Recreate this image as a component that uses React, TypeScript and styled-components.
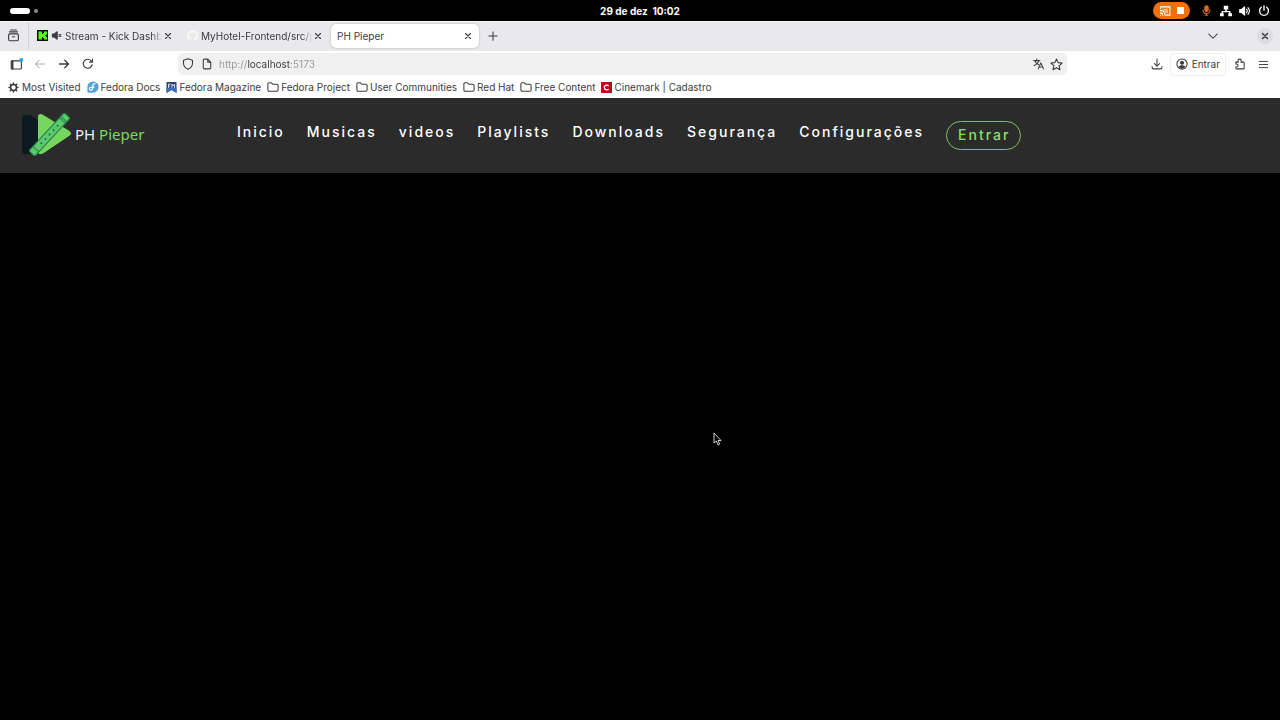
import React from 'react';
import styled, { createGlobalStyle } from 'styled-components';

const GlobalStyle = createGlobalStyle`
  * { box-sizing: border-box; }
  body {
    margin: 0;
    background: #000;
    font-family: Inter, 'Noto Sans', sans-serif;
  }
  button {
    margin: 0;
    padding: 0;
    border: 0;
    background: none;
    color: inherit;
    font: inherit;
    cursor: pointer;
  }
  a { color: inherit; text-decoration: none; }
  svg { display: block; flex: none; }
`;

const Screen = styled.div`
  display: flex;
  flex-direction: column;
  min-height: 100vh;
  font-size: 10px;
  line-height: 14px;
`;

const SystemBar = styled.header`
  display: grid;
  grid-template-columns: 1fr auto 1fr;
  align-items: center;
  height: 21px;
  padding: 0 10px;
  color: #fff;
`;

const Workspaces = styled.button`
  display: flex;
  align-items: center;
  gap: 4px;
  justify-self: start;
`;

const WorkspaceDot = styled.span<{ $active?: boolean }>`
  width: ${p => (p.$active ? 20 : 4)}px;
  height: ${p => (p.$active ? 6 : 4)}px;
  border-radius: 3px;
  background: ${p => (p.$active ? '#fff' : '#8c8c8c')};
`;

const Clock = styled.time`
  font-weight: 700;
  white-space: pre;
`;

const StatusArea = styled.div`
  display: flex;
  align-items: center;
  justify-content: flex-end;
  gap: 6px;
`;

const CastPill = styled.button`
  display: flex;
  align-items: center;
  justify-content: center;
  gap: 5px;
  width: 37px;
  height: 17px;
  margin-right: 4px;
  border-radius: 9px;
  background: #ed7009;
`;

const TabStrip = styled.div`
  display: flex;
  align-items: center;
  height: 30px;
  padding: 0 7px 2px 0;
  border-top: 1px solid #fafafa;
  background: #e9e9eb;
  color: #3b3b3e;
`;

const TabOverview = styled.button`
  display: flex;
  align-items: center;
  align-self: stretch;
  width: 29px;
  padding-left: 7px;
  margin-right: 2px;
  border-right: 1px solid #cfcfd1;
`;

const Tabs = styled.div`
  display: flex;
  gap: 2px;
`;

const Tab = styled.div<{ $active?: boolean }>`
  display: flex;
  align-items: center;
  width: 148px;
  height: 24px;
  padding: 0 5px 0 6px;
  border-radius: 5px;
  background: ${p => (p.$active ? '#fff' : 'transparent')};
  box-shadow: ${p => (p.$active ? '0 0 2px rgba(0, 0, 0, 0.3)' : 'none')};
`;

const TabButton = styled.button<{ $fade?: boolean }>`
  display: flex;
  align-items: center;
  gap: 3px;
  flex: 1;
  min-width: 0;
  white-space: nowrap;
  mask-image: ${p => (p.$fade ? 'linear-gradient(to left, transparent, #000 10px)' : 'none')};
`;

const IconButton = styled.button<{ $size?: number; $round?: boolean }>`
  display: flex;
  align-items: center;
  justify-content: center;
  width: ${p => p.$size ?? 24}px;
  height: ${p => Math.min(p.$size ?? 24, 24)}px;
  border-radius: ${p => (p.$round ? '50%' : '4px')};
  background: ${p => (p.$round ? '#dcdcde' : 'transparent')};
  flex: none;
`;

const WindowControls = styled.div`
  display: flex;
  margin-left: 32px;
`;

const Spring = styled.div`
  flex: 3;
`;

const Toolbar = styled.div`
  display: flex;
  align-items: center;
  height: 26px;
  padding: 0 4px;
  background: #fff;
  color: #3b3b3e;
`;

const AddressBar = styled.form`
  display: flex;
  align-items: center;
  flex: 34;
  height: 22px;
  padding: 0 1px 0 4px;
  border-radius: 5px;
  background: #f0f0f1;
`;

const AddressInput = styled.input`
  flex: 1;
  min-width: 0;
  padding: 0;
  border: 0;
  outline: 0;
  font: inherit;
  color: transparent;
  background: linear-gradient(to right, #96969a 29px, #3b3b3e 29px, #3b3b3e 71px, #96969a 71px);
  -webkit-background-clip: text;
  background-clip: text;
`;

const SignInButton = styled.button`
  display: flex;
  align-items: center;
  gap: 4px;
  height: 23px;
  margin: 0 2px 0 1px;
  padding: 0 5px;
  border: 1px solid #f0f0f1;
  border-radius: 4px;
`;

const Bookmarks = styled.nav`
  display: flex;
  align-items: center;
  gap: 6px;
  height: 21px;
  padding: 0 9px 1px 8px;
  background: #fff;
  color: #3b3b3e;
`;

const Bookmark = styled.a`
  display: flex;
  align-items: center;
  gap: 2px;
  white-space: nowrap;

  &:first-child { gap: 3px; }
`;

const SiteHeader = styled.header`
  display: flex;
  align-items: center;
  height: 75px;
  padding: 0 22px;
  background: #2b2b2b;
`;

const Brand = styled.a`
  display: flex;
  align-items: center;
  gap: 3px;
  width: 215px;
  color: #f2f2f2;
  font: 15px/20px 'Noto Sans', sans-serif;
`;

const BrandName = styled.span`
  padding-bottom: 4px;
`;

const BrandAccent = styled.span`
  color: #7bdb5c;
`;

const SiteNav = styled.nav`
  display: flex;
  align-items: center;
  gap: 22px;
  font-size: 14px;
  line-height: 20px;
  font-weight: 500;
  letter-spacing: 2px;
`;

const PageLinks = styled.div`
  display: flex;
  gap: 22px;
  padding-bottom: 8px;
`;

const NavLink = styled.a`
  color: #fff;
`;

const LoginButton = styled.button`
  height: 29px;
  padding: 0 10px 1px 11px;
  border: 1px solid #7fbf5f;
  border-radius: 15px;
  color: #86e065;
  letter-spacing: inherit;
`;

const Content = styled.main`
  position: relative;
  flex: 1;
  background: #000;
`;

const Pointer = styled.svg`
  position: absolute;
  left: 713px;
  top: 259px;
`;

type IconProps = { size?: number; children: React.ReactNode; weight?: number };

const Icon = ({ size = 12, weight = 1.4, children }: IconProps) => (
  <svg width={size} height={size} viewBox="0 0 16 16" fill="none" stroke="currentColor"
    strokeWidth={weight} strokeLinecap="round" strokeLinejoin="round" aria-hidden="true">
    {children}
  </svg>
);

const CloseIcon = ({ weight = 1.8 }: { weight?: number }) => (
  <Icon size={10} weight={weight}><path d="M4 4l8 8M12 4l-8 8" /></Icon>
);

const FolderIcon = () => (
  <Icon><path d="M1.2 4a1.6 1.6 0 0 1 1.6-1.6h3.1l2 2h5.3A1.6 1.6 0 0 1 14.8 6v6a1.6 1.6 0 0 1-1.6 1.6H2.8A1.6 1.6 0 0 1 1.2 12z" /></Icon>
);

const GearIcon = () => (
  <Icon size={11} weight={2.2}>
    <circle cx="8" cy="8" r="4.3" />
    <path d="M8 1.500v2M8 12.500v2M1.500 8h2M12.500 8h2M3.400 3.400l1.300 1.300M11.300 11.300l1.300 1.300M12.600 3.400l-1.300 1.300M4.700 11.300l-1.300 1.300" />
  </Icon>
);

const FedoraIcon = () => (
  <svg width="12" height="12" viewBox="0 0 16 16" aria-hidden="true">
    <path d="M8 .5A7.500 7.500 0 1 1 8 15.500H2A1.500 1.500 0 0 1 .5 14V8A7.500 7.500 0 0 1 8 .5z" fill="#51a2da" />
    <path d="M11 3.600C9 3 8 4.300 7.800 6l-.4 4.200c-.2 2-2.200 2.700-3.600 1.500-1.300-1.300-.4-3.200 1.500-3.300l4.200-.2" fill="none" stroke="#fff" strokeWidth="1.500" strokeLinecap="round" />
  </svg>
);

const MagazineIcon = () => (
  <svg width="11" height="11" viewBox="0 0 11 11" aria-hidden="true">
    <path d="M.5 0h10v11l-5-3-5 3z" fill="#294172" />
    <path d="M.5 6h10v5l-5-3-5 3z" fill="#3c6eb4" />
    <path d="M2.500 6V2h2.200M2.500 4h1.800M6 6V2l1.300 2 1.300-2v4" fill="none" stroke="#dfe8f5" strokeWidth=".9" />
  </svg>
);

const CinemarkIcon = () => (
  <svg width="11" height="11" viewBox="0 0 11 11" aria-hidden="true">
    <path d="M0 0h11v11H0z" fill="#b80f1c" />
    <path d="M7.600 4A2.400 2.400 0 1 0 7.600 7" fill="none" stroke="#fff" strokeWidth="1.200" />
  </svg>
);

const KickIcon = () => (
  <svg width="11" height="11" viewBox="0 0 11 11" aria-hidden="true">
    <path d="M0 0h11v11H0z" fill="#0b120a" />
    <path d="M1.500 1.500H5V4h1V3h1V1.500h3v3H9v1H8v.5h1v1h1v2.500H7V8H6V7H5v2.500H1.500z" fill="#53fc18" />
  </svg>
);

const MutedIcon = () => (
  <Icon size={11} weight={1.5}>
    <path d="M2 6h2.500L9 2.500v11L4.500 10H2z" fill="currentColor" />
    <path d="M11.500 6.500l3 3M14.500 6.500l-3 3" />
  </Icon>
);

const GithubIcon = () => (
  <svg width="11" height="11" viewBox="0 0 16 16" fill="#f8f8f9" aria-hidden="true">
    <path d="M8 .2a8 8 0 0 0-2.500 15.500c.4.100.5-.2.5-.4v-1.400c-2.200.5-2.700-1-2.700-1-.4-.9-.9-1.200-.9-1.200-.7-.5.100-.5.100-.5.800.100 1.200.8 1.200.8.700 1.200 1.900.9 2.300.7.100-.5.300-.9.500-1.100-1.800-.2-3.600-.9-3.600-4 0-.9.300-1.600.8-2.100-.100-.2-.4-1 .100-2.100 0 0 .7-.2 2.200.8a7.500 7.500 0 0 1 4 0c1.500-1 2.200-.8 2.200-.8.4 1.100.2 1.900.100 2.100.5.600.8 1.300.8 2.100 0 3.100-1.900 3.800-3.600 4 .3.200.5.700.5 1.500v2.200c0 .2.100.5.600.4A8 8 0 0 0 8 .2z" />
  </svg>
);

const BrandMark = () => (
  <svg width="50" height="46" viewBox="0 0 50 46" aria-hidden="true">
    <path d="M3 2h5l14 9v26L7 41.500H3a3 3 0 0 1-3-3V5a3 3 0 0 1 3-3z" fill="#0e1a22" />
    <path d="M20 1.300L47.500 18q3 2.300 0 4.700L21 40.500q-5 2-5-2V4q0-4 4-2.700z" fill="#76d65e" />
    <g transform="translate(27.500 21.500) rotate(-47)">
      <rect x="-26" y="-4" width="52" height="8" rx="2" fill="#5cc96c" stroke="#23824a" strokeWidth="1.100" />
      <path d="M-20 -4v8M19 -4v8M21 -4v8" stroke="#23824a" strokeWidth="1" />
      <g fill="#1d6b40">
        <circle cx="-12" r="1" /><circle cx="-6" r="1" /><circle r="1" /><circle cx="6" r="1" /><circle cx="12" r="1" />
      </g>
    </g>
  </svg>
);

const folders = ['Fedora Project', 'User Communities', 'Red Hat', 'Free Content'];
const pages = ['Inicio', 'Musicas', 'videos', 'Playlists', 'Downloads', 'Segurança', 'Configurações'];

export default function App() {
  return (
    <Screen>
      <GlobalStyle />
      <SystemBar>
        <Workspaces aria-label="Atividades">
          <WorkspaceDot $active />
          <WorkspaceDot />
        </Workspaces>
        <Clock>29 de dez  10:02</Clock>
        <StatusArea>
          <CastPill aria-label="Parar transmissão">
            <Icon weight={1.5}>
              <path d="M2 5V2.500h12.500v11H9.500" /><path d="M5 5h7v6H9.500L5 7z" fill="currentColor" stroke="none" opacity=".5" />
              <path d="M2 7.500a6 6 0 0 1 6 6M2 10.500a3 3 0 0 1 3 3M2 13.500h.1" />
            </Icon>
            <svg width="9" height="7" viewBox="0 0 9 7" aria-hidden="true"><path d="M1 0h7v7H1z" fill="#fff" /></svg>
          </CastPill>
          <IconButton $size={13} aria-label="Microfone">
            <svg width="11" height="11" viewBox="0 0 16 16" fill="none" stroke="#d9691c" strokeWidth="1.500" aria-hidden="true">
              <rect x="5.500" y="1" width="5" height="8.500" rx="2.500" fill="#d9691c" /><path d="M3 6.500v1a5 5 0 0 0 10 0v-1M8 12.500V15M5.500 15h5" />
            </svg>
          </IconButton>
          <IconButton $size={13} aria-label="Rede">
            <svg width="12" height="12" viewBox="0 0 16 16" fill="#fff" aria-hidden="true">
              <path d="M5 1h6v5H9v2h5v3h2v4h-5v-4h1V9.500H4V11h1v4H0v-4h2V8h5V6H5z" />
            </svg>
          </IconButton>
          <IconButton $size={13} aria-label="Volume">
            <Icon weight={1.5}>
              <path d="M1 6h2.500L7.500 2.500v11L3.500 10H1z" fill="currentColor" />
              <path d="M10 5.500a4 4 0 0 1 0 5M12 3.500a7 7 0 0 1 0 9" />
            </Icon>
          </IconButton>
          <IconButton $size={13} aria-label="Desligar">
            <Icon weight={1.8}><path d="M8 1v6M4.500 3a6 6 0 1 0 7 0" /></Icon>
          </IconButton>
        </StatusArea>
      </SystemBar>

      <TabStrip>
        <TabOverview aria-label="Ver abas">
          <Icon size={13}>
            <rect x="2" y="6" width="12" height="8.500" rx="1.500" /><path d="M3 3.500h10M4.500 1.200h7M6.500 9.500h3" />
          </Icon>
        </TabOverview>
        <Tabs role="tablist">
          <Tab>
            <TabButton role="tab" aria-selected="false" $fade>
              <KickIcon /><MutedIcon />Stream - Kick Dashb
            </TabButton>
            <IconButton $size={12} aria-label="Fechar aba"><CloseIcon /></IconButton>
          </Tab>
          <Tab>
            <TabButton role="tab" aria-selected="false" $fade>
              <GithubIcon />MyHotel-Frontend/src/p
            </TabButton>
            <IconButton $size={12} aria-label="Fechar aba"><CloseIcon /></IconButton>
          </Tab>
          <Tab $active>
            <TabButton role="tab" aria-selected="true">PH Pieper</TabButton>
            <IconButton $size={12} aria-label="Fechar aba"><CloseIcon /></IconButton>
          </Tab>
        </Tabs>
        <IconButton $size={28} aria-label="Nova aba">
          <Icon><path d="M8 2.500v11M2.500 8h11" /></Icon>
        </IconButton>
        <Spring />
        <IconButton $size={24} aria-label="Listar abas">
          <Icon><path d="M2.500 5.500L8 11l5.500-5.500" /></Icon>
        </IconButton>
        <WindowControls>
          <IconButton $size={16} $round aria-label="Fechar janela"><CloseIcon weight={2.4} /></IconButton>
        </WindowControls>
      </TabStrip>

      <Toolbar>
        <IconButton aria-label="Barra lateral">
          <Icon size={13}>
            <rect x="1.500" y="3.500" width="12.500" height="10" rx="1" /><path d="M3 4v9" strokeWidth="2.500" />
            <circle cx="14" cy="2.500" r="2.500" fill="#28a9e0" stroke="none" />
          </Icon>
        </IconButton>
        <IconButton aria-label="Voltar" disabled>
          <Icon><path d="M14 8H2M7 3L2 8l5 5" stroke="#adadb0" /></Icon>
        </IconButton>
        <IconButton aria-label="Avançar">
          <Icon weight={1.7}><path d="M2 8h12M9 3l5 5-5 5" /></Icon>
        </IconButton>
        <IconButton aria-label="Recarregar">
          <Icon weight={1.5}><path d="M13.500 9a6 6 0 1 1-1.500-5.500l2 2M14 1.500v4h-4" /></Icon>
        </IconButton>
        <Spring />
        <AddressBar onSubmit={e => e.preventDefault()}>
          <IconButton type="button" $size={13} aria-label="Proteção">
            <Icon><path d="M8 1l6 2v4c0 4-2.500 6.500-6 8-3.500-1.500-6-4-6-8V3z" /></Icon>
          </IconButton>
          <IconButton type="button" $size={24} aria-label="Informações do site">
            <Icon><path d="M3 3a1.500 1.500 0 0 1 1.500-1.500H9l4 4V13a1.500 1.500 0 0 1-1.500 1.500h-7A1.500 1.500 0 0 1 3 13zM9 1.500v4h4" /></Icon>
          </IconButton>
          <AddressInput aria-label="Endereço" defaultValue="http://localhost:5173" spellCheck={false} />
          <IconButton type="button" $size={18} aria-label="Traduzir">
            <Icon><path d="M1 3.500h8M5 1.500v2M2.500 3.500c.5 2.500 3 4.500 5 5.500M7.500 3.500C7 6.500 4 9 1.500 10M7 14.500l3.500-8 3.500 8M8.200 12h4.600" /></Icon>
          </IconButton>
          <IconButton type="button" $size={18} aria-label="Favoritar">
            <Icon size={13} weight={1.3}><path d="M8 1.200l2 4.500 4.900.5-3.700 3.300 1.100 4.900L8 11.900l-4.300 2.500 1.100-4.900L1.100 6.200 6 5.700z" /></Icon>
          </IconButton>
        </AddressBar>
        <Spring />
        <IconButton aria-label="Downloads">
          <Icon><path d="M8 1.500v9M4.500 7.500L8 11l3.500-3.500M1.500 11.500v1.500a1.500 1.500 0 0 0 1.500 1.500h10a1.500 1.500 0 0 0 1.500-1.500v-1.500" /></Icon>
        </IconButton>
        <SignInButton>
          <Icon>
            <circle cx="8" cy="8" r="6.800" /><circle cx="8" cy="6.300" r="2" fill="currentColor" />
            <path d="M4.300 11.500a4.500 3 0 0 1 7.400 0 5 5 0 0 1-7.400 0z" fill="currentColor" />
          </Icon>
          Entrar
        </SignInButton>
        <IconButton aria-label="Extensões">
          <Icon><path d="M2.500 5.500h3.300C4.600 3.500 5.600 1.500 7.500 1.500s2.900 2 1.700 4h3.300a1 1 0 0 1 1 1v7a1 1 0 0 1-1 1h-9a1 1 0 0 1-1-1v-1.700c2 .4 3-.5 3-1.800s-1-2.200-3-1.800z" /></Icon>
        </IconButton>
        <IconButton aria-label="Menu">
          <Icon size={11}><path d="M2 3.500h12M2 8h12M2 12.500h12" /></Icon>
        </IconButton>
      </Toolbar>

      <Bookmarks aria-label="Favoritos">
        <Bookmark href="#"><GearIcon />Most Visited</Bookmark>
        <Bookmark href="#"><FedoraIcon />Fedora Docs</Bookmark>
        <Bookmark href="#"><MagazineIcon />Fedora Magazine</Bookmark>
        {folders.map(name => (
          <Bookmark href="#" key={name}><FolderIcon />{name}</Bookmark>
        ))}
        <Bookmark href="#"><CinemarkIcon />Cinemark | Cadastro</Bookmark>
      </Bookmarks>

      <SiteHeader>
        <Brand href="#">
          <BrandMark />
          <BrandName>PH <BrandAccent>Pieper</BrandAccent></BrandName>
        </Brand>
        <SiteNav aria-label="Principal">
          <PageLinks>
            {pages.map(page => (
              <NavLink href="#" key={page}>{page}</NavLink>
            ))}
          </PageLinks>
          <LoginButton>Entrar</LoginButton>
        </SiteNav>
      </SiteHeader>

      <Content>
        <Pointer width="9" height="14" viewBox="0 0 9 14" aria-hidden="true">
          <path d="M1 1v10l2.300-2 1.700 4 1.700-.8L5 8.500h3z" fill="#000" stroke="#d0d0d0" strokeWidth="1" />
        </Pointer>
      </Content>
    </Screen>
  );
}
